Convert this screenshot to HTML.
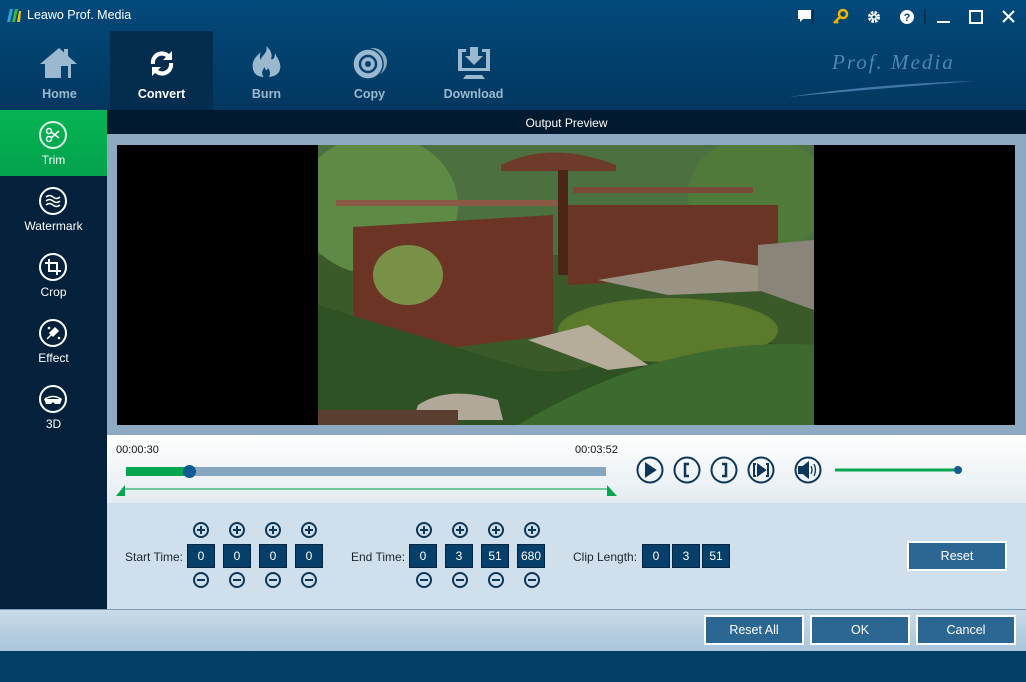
<!DOCTYPE html>
<html><head><meta charset="utf-8"><style>
*{margin:0;padding:0;box-sizing:border-box}
body{width:1026px;height:682px;overflow:hidden;font-family:"Liberation Sans",sans-serif;position:relative;background:#033e66}
.a{position:absolute}
.hdr{left:0;top:0;width:1026px;height:110px;background:linear-gradient(#034a7c,#02375f)}
.tab{top:31px;width:103px;height:79px;text-align:center;color:#9bb8cf;font-weight:bold;font-size:12.5px}
.tab span{position:absolute;left:0;right:0;top:56px}
.side{left:0;top:110px;width:107px;height:499px;background:#03213b}
.si{left:0;width:107px;height:66px;text-align:center;color:#fff;font-size:12px}
.si svg{position:absolute;left:38px;top:10px}
.si span{position:absolute;left:0;right:0;top:43px}
.box{top:544px;width:28px;height:24px;background:#063f6a;border:1px solid #03243f;color:#fff;font-size:12px;text-align:center;line-height:22px}
.btn{background:#2c6794;border:2px solid #fff;color:#fff;font-size:12.5px;text-align:center;line-height:26px;height:30px}
.lbl{font-size:12px;color:#1a2733;top:550px}
</style></head><body>
<div class="a hdr"></div>
<div class="a" style="left:6px;top:8px;width:16px;height:15px">
<svg width="16" height="15"><path d="M1 14L4 1h3L4 14z" fill="#2aa7e0"/><path d="M6 14L9 1h3L9 14z" fill="#3ab54a"/><path d="M11 14L13 3h2l-1 11z" fill="#f5c400"/></svg></div>
<div class="a" style="left:27px;top:8px;color:#fff;font-size:12.5px">Leawo Prof. Media</div>
<svg class="a" style="left:790px;top:6px" width="236" height="22">
<path d="M8 4h13v9h-8l-3 3v-3H8z" fill="#fff"/>
<line x1="23" y1="3" x2="23" y2="18" stroke="#0a2a44" stroke-width="1.5"/>
<circle cx="53" cy="8" r="4" fill="none" stroke="#f3b400" stroke-width="2.5"/><path d="M50 11l-6 6M46 15l2 2" stroke="#f3b400" stroke-width="2.5"/>
<circle cx="84" cy="11" r="4.5" fill="none" stroke="#fff" stroke-width="3" stroke-dasharray="2.4 1.2"/><circle cx="84" cy="11" r="3" fill="#fff"/><circle cx="84" cy="11" r="1.5" fill="#02456f"/>
<circle cx="117" cy="11" r="7" fill="#fff"/><text x="117" y="15" font-size="11" font-weight="bold" text-anchor="middle" fill="#02456f" font-family="Liberation Sans">?</text>
<line x1="135" y1="3" x2="135" y2="18" stroke="#0a2a44" stroke-width="1.5"/>
<line x1="147" y1="16" x2="160" y2="16" stroke="#fff" stroke-width="2"/>
<rect x="180" y="5" width="12" height="12" fill="none" stroke="#fff" stroke-width="2"/>
<path d="M213 5l11 11M224 5l-11 11" stroke="#fff" stroke-width="2"/>
</svg>
<div class="a" style="left:832px;top:50px;color:#4f85b0;font-family:'Liberation Serif',serif;font-style:italic;font-size:21px;letter-spacing:2px">Prof. Media</div>
<svg class="a" style="left:785px;top:78px" width="200" height="22"><path d="M3 19Q90 6 190 3Q100 10 3 19z" fill="#3f79a8"/></svg>
<div class="a tab" style="left:8px"><svg style="position:absolute;left:31px;top:16px" width="40" height="32"><path d="M20 1L1 17h5v14h26V17h6z" fill="#9bb8cf"/><rect x="25" y="2" width="4" height="8" fill="#9bb8cf"/><rect x="22" y="19" width="7" height="12" fill="#044170"/></svg><span>Home</span></div>
<div class="a tab" style="left:110px;background:#022d4f;color:#fff"><svg style="position:absolute;left:36px;top:16px" width="32" height="33"><path d="M5 17A11 11 0 0 1 23 7l3-3v9h-9l3-3A7 7 0 0 0 9 17z" fill="#fff"/><path d="M27 16A11 11 0 0 1 9 26l-3 3v-9h9l-3 3A7 7 0 0 0 23 16z" fill="#fff"/></svg><span>Convert</span></div>
<div class="a tab" style="left:215px"><svg style="position:absolute;left:34px;top:14px" width="34" height="36"><path d="M17 1C20 8 12 10 12 15C10 12 11 9 12 7C6 12 1 18 5 27C8 34 26 34 30 27C34 19 28 13 26 8C26 13 24 15 22 14C24 9 21 4 17 1z" fill="#9bb8cf"/><path d="M17 34C12 31 12 26 16 22C16 26 18 26 19 23C22 27 22 32 17 34z" fill="#044170"/></svg><span>Burn</span></div>
<div class="a tab" style="left:318px"><svg style="position:absolute;left:34px;top:15px" width="36" height="34"><circle cx="21" cy="16" r="14" fill="#8aa8c0"/><circle cx="16" cy="18" r="15" fill="#9bb8cf" stroke="#044170" stroke-width="1.5"/><circle cx="16" cy="18" r="8" fill="none" stroke="#044170" stroke-width="2.5"/><circle cx="16" cy="18" r="3" fill="#044170"/></svg><span>Copy</span></div>
<div class="a tab" style="left:422px"><svg style="position:absolute;left:34px;top:15px" width="36" height="34"><path d="M2 3h8v3H6v16h24V6h-4V3h8v22H2z" fill="#9bb8cf"/><path d="M14 1h8v9h5l-9 9-9-9h5z" fill="#9bb8cf"/><path d="M10 29h16l3 4H7z" fill="#9bb8cf"/></svg><span>Download</span></div>
<div class="a side"></div>
<div class="a si" style="top:110px;background:linear-gradient(#05b454,#04a24b)"><svg width="30" height="30"><circle cx="15" cy="15" r="13" fill="none" stroke="#d8f3e2" stroke-width="2"/><circle cx="11" cy="11" r="2.5" fill="none" stroke="#fff" stroke-width="1.5"/><circle cx="11" cy="19" r="2.5" fill="none" stroke="#fff" stroke-width="1.5"/><path d="M13 12l8 6M13 18l8-7" stroke="#fff" stroke-width="1.5"/></svg><span>Trim</span></div>
<div class="a si" style="top:176px"><svg width="30" height="30"><circle cx="15" cy="15" r="13" fill="none" stroke="#fff" stroke-width="2"/><path d="M8 11q3.5-3 7 0t7 0M8 15q3.5-3 7 0t7 0M8 19q3.5-3 7 0t7 0" fill="none" stroke="#fff" stroke-width="1.5"/></svg><span>Watermark</span></div>
<div class="a si" style="top:242px"><svg width="30" height="30"><circle cx="15" cy="15" r="13" fill="none" stroke="#fff" stroke-width="2"/><path d="M11 7v12h12M7 11h12v12" fill="none" stroke="#fff" stroke-width="2"/></svg><span>Crop</span></div>
<div class="a si" style="top:308px"><svg width="30" height="30"><circle cx="15" cy="15" r="13" fill="none" stroke="#fff" stroke-width="2"/><path d="M9 21l8-8M17 10l3 3-5 5-3-3z" stroke="#fff" stroke-width="1.5" fill="#fff"/><circle cx="11" cy="10" r="1.3" fill="#fff"/><circle cx="21" cy="20" r="1.3" fill="#fff"/></svg><span>Effect</span></div>
<div class="a si" style="top:374px"><svg width="30" height="30"><circle cx="15" cy="15" r="13" fill="none" stroke="#fff" stroke-width="2"/><path d="M7 15q8-5 16 0" stroke="#fff" fill="none" stroke-width="1.5"/><path d="M6 15h18l-2 5h-5l-2-2-2 2H8z" fill="#fff"/></svg><span>3D</span></div>
<div class="a" style="left:107px;top:110px;width:919px;height:24px;background:#021a2f;color:#fff;font-size:12px;text-align:center;line-height:26px">Output Preview</div>
<div class="a" style="left:107px;top:134px;width:919px;height:301px;background:#8eaac2"></div>
<div class="a" style="left:117px;top:145px;width:898px;height:280px;background:#000"></div>
<svg class="a" style="left:318px;top:145px" width="496" height="280">
<rect width="496" height="280" fill="#3a5a2a"/>
<rect x="0" y="0" width="496" height="110" fill="#4d7040"/>
<ellipse cx="60" cy="60" rx="80" ry="70" fill="#5f8a45"/>
<ellipse cx="440" cy="50" rx="70" ry="60" fill="#4f7a3a"/>
<path d="M18 55h225v6H18z" fill="#8a5a46"/>
<path d="M183 20q50-25 115 0v6H183z" fill="#6e3b2a"/>
<rect x="240" y="25" width="10" height="105" fill="#4a2518"/>
<path d="M35 82L235 70v120L35 215z" fill="#6b3424"/>
<path d="M250 60H460v70l-210 10z" fill="#6a3525"/>
<path d="M255 42h180v6H255z" fill="#7a4a38"/>
<path d="M0 160v120h496V210q-80-30-180-10q-60 40-120 20z" fill="#2f5224"/>
<ellipse cx="350" cy="185" rx="110" ry="32" fill="#5c7a2c"/>
<path d="M280 135l120-20 70 10v20l-120 5z" fill="#9a9384"/>
<path d="M440 100l56-5v70l-56-20z" fill="#8a8578"/>
<path d="M210 195l60-15 60 40-40 5z" fill="#b5ad9a"/>
<path d="M100 260q30-20 80-5l5 20H95z" fill="#b0a898"/>
<path d="M200 280q150-90 296-80v80z" fill="#3d6a2e"/>
<ellipse cx="90" cy="130" rx="35" ry="30" fill="#7da850" opacity=".8"/>
<rect x="0" y="265" width="140" height="15" fill="#5a3e30"/>
</svg>
<div class="a" style="left:107px;top:435px;width:919px;height:68px;background:linear-gradient(#fff,#e4ecf1)"></div>
<div class="a" style="left:116px;top:444px;font-size:11px;color:#111">00:00:30</div>
<div class="a" style="left:575px;top:444px;font-size:11px;color:#111">00:03:52</div>
<div class="a" style="left:126px;top:467px;width:480px;height:9px;background:#86a6c0"></div>
<div class="a" style="left:126px;top:467px;width:63px;height:9px;background:#06a650"></div>
<div class="a" style="left:183px;top:465px;width:13px;height:13px;border-radius:50%;background:#0e5a92"></div>
<div class="a" style="left:124px;top:488px;width:484px;height:2px;background:#6fc99a"></div>
<svg class="a" style="left:116px;top:482px" width="502" height="16"><path d="M0 14L9 3v11z" fill="#06a650"/><path d="M491 3l10 11h-10z" fill="#06a650"/></svg>
<svg class="a" style="left:635px;top:455px" width="330" height="32" fill="none" stroke="#0d3658" stroke-width="2">
<circle cx="15" cy="15" r="12.5"/><path d="M11 9l9 6-9 6z" fill="#0d3658"/>
<circle cx="52" cy="15" r="12.5"/><path d="M54 9h-4v12h4" stroke-width="2.5"/>
<circle cx="89" cy="15" r="12.5"/><path d="M87 9h4v12h-4" stroke-width="2.5"/>
<circle cx="126" cy="15" r="12.5"/><path d="M121 9h-2v12h2M131 9h2v12h-2"/><path d="M123 10l7 5-7 5z" fill="#0d3658"/>
<circle cx="173" cy="15" r="12.5"/><path d="M164 12h4l5-4v14l-5-4h-4z" fill="#0d3658"/><path d="M176 11q2 4 0 8M179 9q3 6 0 12" stroke-width="1.3"/>
<line x1="200" y1="15" x2="322" y2="15" stroke="#06a650" stroke-width="3"/><circle cx="323" cy="15" r="4" fill="#0e5a92" stroke="none"/>
</svg>
<div class="a" style="left:107px;top:503px;width:919px;height:106px;background:#cfdfeb"></div>
<svg class="a" style="left:180px;top:520px" width="380" height="72" fill="none" stroke="#0d3658" stroke-width="2">
<g id="pm"><circle cx="21" cy="10" r="7"/><path d="M17 10h8M21 6v8"/><circle cx="21" cy="60" r="7"/><path d="M17 60h8"/></g>
<use href="#pm" x="36"/><use href="#pm" x="72"/><use href="#pm" x="108"/>
<use href="#pm" x="223"/><use href="#pm" x="259"/><use href="#pm" x="295"/><use href="#pm" x="331"/>
</svg>
<div class="a lbl" style="left:125px">Start Time:</div>
<div class="a box" style="left:187px">0</div><div class="a box" style="left:223px">0</div><div class="a box" style="left:259px">0</div><div class="a box" style="left:295px">0</div>
<div class="a lbl" style="left:351px">End Time:</div>
<div class="a box" style="left:409px">0</div><div class="a box" style="left:445px">3</div><div class="a box" style="left:481px">51</div><div class="a box" style="left:517px">680</div>
<div class="a lbl" style="left:573px">Clip Length:</div>
<div class="a box" style="left:642px">0</div><div class="a box" style="left:672px">3</div><div class="a box" style="left:702px">51</div>
<div class="a btn" style="left:907px;top:541px;width:100px">Reset</div>
<div class="a" style="left:0;top:609px;width:1026px;height:42px;background:linear-gradient(#c9dbe8,#a9c5dc);border-top:1px solid #7d9db7"></div>
<div class="a btn" style="left:704px;top:615px;width:100px">Reset All</div>
<div class="a btn" style="left:810px;top:615px;width:100px">OK</div>
<div class="a btn" style="left:916px;top:615px;width:100px">Cancel</div>
</body></html>
